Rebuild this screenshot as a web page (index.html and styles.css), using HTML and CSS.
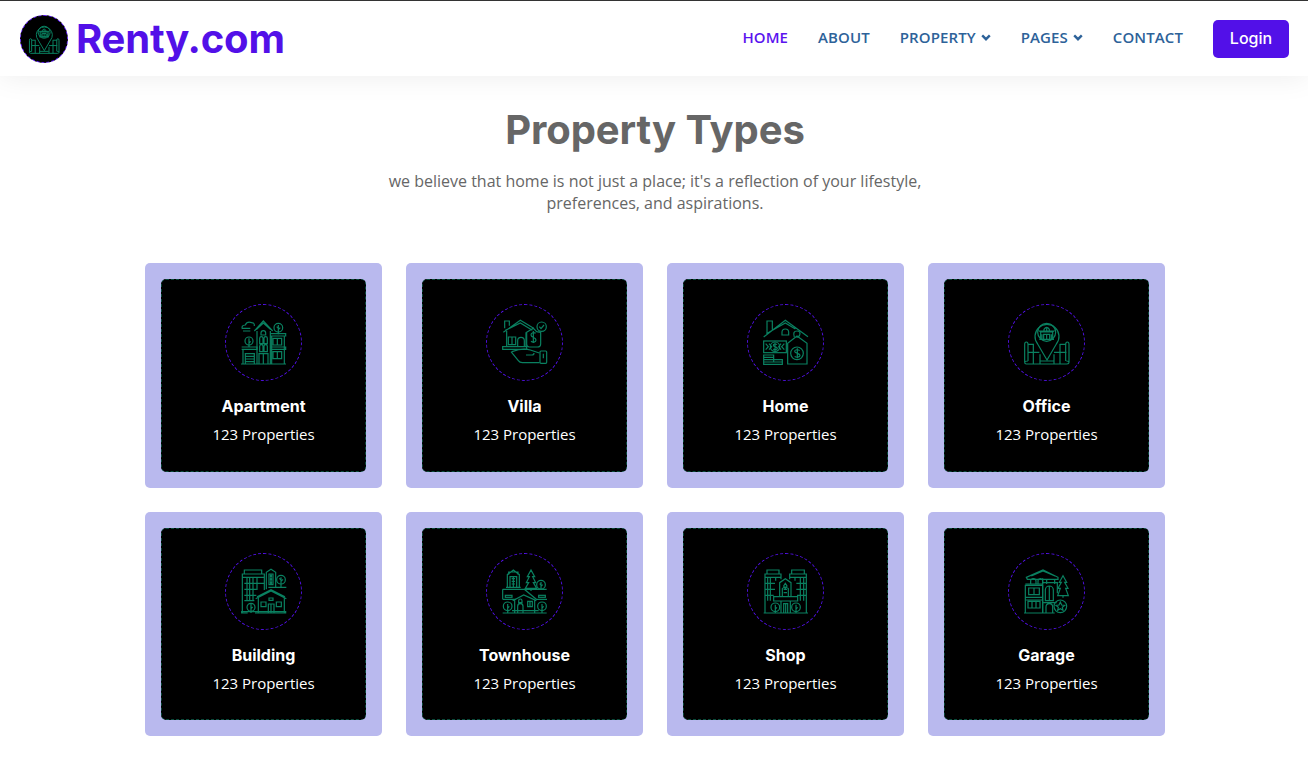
FILE: index.html
```html
<!DOCTYPE html>
<html lang="en">
<head>
<meta charset="utf-8">
<title>Renty.com</title>
<link rel="stylesheet" href="styles.css">
</head>
<body>
<header class="navbar">
  <a class="brand" href="#">
    <span class="brand-mark">
      <svg class="brand-icon"><use href="#i-office"/></svg>
    </span>
    <span class="brand-name">Renty.com</span>
  </a>
  <nav class="nav">
    <a class="nav-link active" href="#">HOME</a>
    <a class="nav-link" href="#">ABOUT</a>
    <a class="nav-link" href="#">PROPERTY<svg class="chev" viewBox="0 0 10 7"><path d="M1.2 1.4 5 5.2l3.8-3.8"/></svg></a>
    <a class="nav-link" href="#">PAGES<svg class="chev" viewBox="0 0 10 7"><path d="M1.2 1.4 5 5.2l3.8-3.8"/></svg></a>
    <a class="nav-link" href="#">CONTACT</a>
    <a class="login" href="#">Login</a>
  </nav>
</header>

<svg class="defs" aria-hidden="true">
  <defs>
    <symbol id="i-apartment" viewBox="78 75 135 135" overflow="visible">
      <path d="M82 102q-4-11 9-12 5-12 19-7 9 0 8 10M80 100h26M84 108h22"/>
      <path d="M118 108 145 78l28 30M124 104 145 84l22 20M126 108v99M166 108v99"/>
      <path d="M138 120v-6a7 7 0 0 1 14 0v6zM134 146v-16a5 5 0 0 1 10 0v16zM147 146v-16a5 5 0 0 1 10 0v16zM134 170v-16a5 5 0 0 1 10 0v16zM147 170v-16a5 5 0 0 1 10 0v16zM132 207v-31h27v31M145 176v31"/>
      <circle cx="190" cy="98" r="13"/><path d="M190 90v28M190 104l6-6M190 100l-5-5"/>
      <path d="M166 116h46v7h-46M170 123v84M208 123v84M174 130h26v20h-26zM187 130v20M166 156h46v7h-46M174 170h26v21h-26zM187 170v21"/>
      <circle cx="102" cy="138" r="12"/><path d="M102 130v26M102 144l5-5"/>
      <path d="M80 156h46v7H80M84 163v44M91 207v-31h27v31M91 184h27M91 192h27M91 200h27M78 207h135"/>
    </symbol>
    <symbol id="i-villa" viewBox="78 75 135 135" overflow="visible">
      <path d="M82 112 133 76l40 24M88 106 133 84l36 22M92 108V155M86 100V78h14v14M150 112v43"/>
      <path d="M97 126h22v23H97zM108 126v23M125 155v-18a10 10 0 0 1 20 0v18M80 155h72v8H80z"/>
      <path d="M152 112l20-12 10 10 12 2v34q0 10-10 10h-24q-8 0-8-8z"/>
      <circle cx="197" cy="95" r="14"/><path d="M190 95l5 6 9-11"/>
      <path d="M179 115c-5-4-14-2-14 5 0 9 15 6 15 15 0 7-10 8-15 4M172 108v36"/>
      <path d="M105 170l22 27q4 6 12 6h52M108 170q32-12 55-5l27 9M150 180h18q6 0 6-6"/>
      <rect x="192" y="168" width="20" height="37" rx="3"/><path d="M202 176v14"/>
    </symbol>
    <symbol id="i-home" viewBox="78 75 135 135" overflow="visible">
      <path d="M80 126 145 76l68 49M88 116 145 84l30 18M90 116V78h16v26"/>
      <path d="M135 120v-8a10 10 0 0 1 20 0v8z"/>
      <rect x="80" y="138" width="68" height="35"/><circle cx="114" cy="155" r="14"/>
      <path d="M120 149c-3-3-11-3-11 2 0 6 12 3 12 9 0 5-9 5-12 2M114 143v24M86 146l8 9-8 9M96 146l8 9-8 9M142 146l-8 9 8 9M132 146l-7 9 7 9"/>
      <path d="M80 180h30v7H80zM80 187h30v7H80zM80 194h30v7H80zM80 201h56v7H80zM110 194h26v7"/>
      <path d="M152 205v-60l28-22 30 22v62h-58z"/>
      <path d="M172 126q-6-18 8-18 12 0 8 12-3 8-10 6"/>
      <circle cx="180" cy="175" r="19"/>
      <path d="M188 167c-4-4-15-4-15 2 0 8 16 4 16 12 0 7-12 7-16 3M181 160v30"/>
    </symbol>
    <symbol id="i-office" viewBox="78 75 135 135" overflow="visible">
      <path d="M147 195l-28-48a36 36 0 1 1 56 0z"/>
      <circle cx="146" cy="112" r="27"/>
      <path d="M128 133v-22h36v22M124 133h44M128 111l-3-3h42l-3 3M138 111v-8q8-12 16 0v8M146 100v8M137 118h18v15h-18zM146 118v15M132 118v15M160 118v15"/>
      <path d="M80 148v54q0 5 5 5h122q6 0 6-5v-54q0-7-5-7t-5 7v50M80 148q0-7 5-7t5 7v50M90 198q-10 0-10 4M213 202q0-4-8-4M90 148h18M185 148h20"/>
      <path d="M90 172h34M168 172h37M106 148v59M186 148v59M126 178v29M168 178v29M126 198h41"/>
    </symbol>
    <symbol id="i-building" viewBox="78 75 135 135" overflow="visible">
      <path d="M82 207V90h66v48M88 90V78h52v12M82 100h66M104 100v70M126 100v38M88 118h60M88 136h36M88 154h36M88 170h30M96 100v70M114 100v70"/>
      <path d="M154 136V85l14-9 14 9v44M162 90h12v32h-12zM168 90v32"/>
      <circle cx="168" cy="96" r="2"/><circle cx="168" cy="106" r="2"/><circle cx="168" cy="116" r="2"/>
      <circle cx="198" cy="107" r="13"/><path d="M198 100v30M198 112l6-6M198 108l-5-5M160 130h54"/>
      <path d="M122 164l46-23 46 23M126 158l42-21 42 21"/>
      <path d="M130 162v45M208 162v45M160 207v-27h17v27M168 180v27M138 174h15v14h-15zM184 174h15v14h-15zM162 162h12v7h-12z"/>
      <circle cx="108" cy="190" r="12"/><path d="M108 180v27M108 194l5-5M98 207h-18v-4h132v4h-92"/>
    </symbol>
    <symbol id="i-townhouse" viewBox="78 75 135 135" overflow="visible">
      <path d="M94 130V92l18-14 18 14v38M98 92v-8h28v8M102 130V98h20v32M90 130h44M112 100v30M107 104h10M107 112h10M107 120h10"/>
      <path d="M165 78l-11 20h6l-9 18h7l-10 17h34l-10-17h7l-9-18h6zM165 133v8"/>
      <circle cx="195" cy="122" r="13"/><path d="M195 114v24M195 127l5-5M195 123l-4-4"/>
      <path d="M80 136h132M80 136v30M80 166h40M145 136l36 30h32M212 136h-30"/>
      <rect x="88" y="154" width="20" height="6"/><rect x="188" y="154" width="20" height="6"/>
      <path d="M110 170l33-17 38 17M116 207v-38M176 207v-40M125 207v-20a8 8 0 0 1 16 0v20M155 172h14v16h-14zM162 172v16M128 170a5 5 0 0 1 10 0v6h-10z"/>
      <circle cx="95" cy="187" r="13"/><path d="M95 180v27M95 192l5-5"/>
      <circle cx="198" cy="187" r="13"/><path d="M198 180v27M198 192l5-5M80 207h132M108 200h80"/>
    </symbol>
    <symbol id="i-shop" viewBox="78 75 135 135" overflow="visible">
      <path d="M84 207V90h48v16M90 90V78h36v12M84 100h48M100 100v70M116 100v10M84 118h30M84 136h30M84 154h26M92 100v70"/>
      <path d="M208 207V90h-50v16M202 90V78h-38v12M158 100h50M190 100v70M174 100v10M178 118h30M178 136h30M180 154h28M200 100v70"/>
      <path d="M128 156v-40l17-12 17 12v40M136 156v-22q9-10 18 0v22M145 118l-5 8 5 8 5-8zM140 136h10M140 146h10"/>
      <path d="M110 158h72v13h-72zM132 207v-36M160 207v-36M140 207v-28h12v28M146 179v28"/>
      <circle cx="115" cy="190" r="13"/><path d="M115 182v25M115 195l5-5"/>
      <circle cx="177" cy="190" r="13"/><path d="M177 182v25M177 195l5-5M80 207h133"/>
    </symbol>
    <symbol id="i-garage" viewBox="78 75 135 135" overflow="visible">
      <path d="M85 100l50-22 45 22v6H88zM100 96l35-15 36 15"/>
      <path d="M98 120v-10a7 7 0 0 1 8-6 8 8 0 0 1 8 6v10M120 120v-10a7 7 0 0 1 7-6 7 7 0 0 1 7 6v10M146 106v14M170 106v14"/>
      <path d="M82 207V124h52v83M134 120H82M82 160h52v8H82M92 132h32v20H92zM108 132v20M90 172h36v20H90zM102 172v20M114 172v20"/>
      <path d="M134 207v-104M134 116h44v32M142 170v-32a12 12 0 0 1 24 0v32zM154 126v44M136 176h40M144 207v-18a10 10 0 0 1 20 0v18M78 207h92"/>
      <path d="M195 95l-11 20h6l-10 18h7l-8 22h32l-8-22h7l-10-18h6zM195 155v6"/>
      <circle cx="187" cy="187" r="19"/><path d="M187 174l4 9 9 1-7 6 2 9-8-5-8 5 2-9-7-6 9-1z"/>
    </symbol>
  </defs>
</svg>

<main class="section">
  <div class="heading">
    <h1 class="title">Property Types</h1>
    <p class="lead">we believe that home is not just a place; it's a reflection of your lifestyle, preferences, and aspirations.</p>
  </div>
  <div class="grid">
    <article class="card"><div class="card-inner"><div class="ring"><svg class="icon"><use href="#i-apartment"/></svg></div><h2 class="name">Apartment</h2><p class="count">123 Properties</p></div></article>
    <article class="card"><div class="card-inner"><div class="ring"><svg class="icon"><use href="#i-villa"/></svg></div><h2 class="name">Villa</h2><p class="count">123 Properties</p></div></article>
    <article class="card"><div class="card-inner"><div class="ring"><svg class="icon"><use href="#i-home"/></svg></div><h2 class="name">Home</h2><p class="count">123 Properties</p></div></article>
    <article class="card"><div class="card-inner"><div class="ring"><svg class="icon"><use href="#i-office"/></svg></div><h2 class="name">Office</h2><p class="count">123 Properties</p></div></article>
    <article class="card"><div class="card-inner"><div class="ring"><svg class="icon"><use href="#i-building"/></svg></div><h2 class="name">Building</h2><p class="count">123 Properties</p></div></article>
    <article class="card"><div class="card-inner"><div class="ring"><svg class="icon"><use href="#i-townhouse"/></svg></div><h2 class="name">Townhouse</h2><p class="count">123 Properties</p></div></article>
    <article class="card"><div class="card-inner"><div class="ring"><svg class="icon"><use href="#i-shop"/></svg></div><h2 class="name">Shop</h2><p class="count">123 Properties</p></div></article>
    <article class="card"><div class="card-inner"><div class="ring"><svg class="icon"><use href="#i-garage"/></svg></div><h2 class="name">Garage</h2><p class="count">123 Properties</p></div></article>
  </div>
</main>
</body>
</html>
```

FILE: styles.css
```css
* { box-sizing: border-box; }
html, body { margin: 0; padding: 0; }
body {
  background: #fff;
  color: #666;
  font-family: "Open Sans", "Noto Sans", sans-serif;
  overflow: hidden;
}
a { text-decoration: none; }
.defs { width: 0; height: 0; display: block; }

.navbar {
  height: 76px;
  border-top: 1px solid #333;
  padding: 0 19px 0 20px;
  display: flex;
  align-items: center;
  justify-content: space-between;
  background: #fff;
  box-shadow: 0 0 30px rgba(0, 0, 0, .08);
}
.brand { display: flex; align-items: center; gap: 8px; }
.brand-mark {
  width: 48px;
  height: 48px;
  border-radius: 50%;
  background: #000;
  border: 1px dashed #5210e8;
  display: flex;
  align-items: center;
  justify-content: center;
}
.brand-icon { width: 30px; height: 30px; fill: none; stroke: #0a8060; stroke-width: 4.5; overflow: visible; }
.brand-name {
  font-family: "Inter", sans-serif;
  font-weight: 700;
  font-size: 40px;
  line-height: 48px;
  letter-spacing: -.2px;
  color: #5210e8;
}
.nav { display: flex; align-items: center; }
.nav-link {
  display: flex;
  align-items: center;
  margin-right: 30px;
  padding-bottom: 3px;
  font-family: "Open Sans", sans-serif;
  font-size: 15px;
  font-weight: 600;
  letter-spacing: .1px;
  color: #2d6299;
  line-height: 22px;
}
.nav-link.active { color: #5a14ef; }
.chev { width: 10px; height: 7px; margin-left: 5px; fill: none; stroke: #2d6299; stroke-width: 2.4; }
.login {
  width: 76px;
  height: 38px;
  padding-bottom: 1px;
  border-radius: 5px;
  background: #5210e8;
  color: #fff;
  font-family: "Inter", sans-serif;
  font-size: 16px;
  font-weight: 500;
  display: flex;
  align-items: center;
  justify-content: center;
}

.section { padding: 28px 143px 0 145px; }
.heading { text-align: center; }
.title {
  margin: 0;
  font-family: "Inter", sans-serif;
  font-weight: 700;
  font-size: 40px;
  line-height: 52px;
  letter-spacing: -.07px;
  color: #666;
}
.lead {
  width: 560px;
  margin: 14px auto 0;
  font-size: 16px;
  line-height: 22px;
  color: #666;
}
.grid {
  margin-top: 49px;
  display: grid;
  grid-template-columns: repeat(4, 237px);
  gap: 24px;
}
.card {
  padding: 16px;
  border-radius: 5px;
  background: #b9b9ee;
}
.card-inner {
  height: 192.6px;
  border: 1px dashed #0a4a3a;
  border-radius: 5px;
  background: #000;
  padding-top: 24px;
  text-align: center;
}
.ring {
  width: 77px;
  height: 77px;
  margin: 0 auto;
  border: 1px dashed #5210e8;
  border-radius: 50%;
  display: flex;
  align-items: center;
  justify-content: center;
}
.icon { width: 45px; height: 45px; fill: none; stroke: #0a8060; stroke-width: 3.6; overflow: visible; }
.name {
  margin: 13px 0 0;
  font-family: "Inter", sans-serif;
  font-size: 16px;
  font-weight: 700;
  line-height: 24px;
  color: #fff;
}
.count {
  margin: 4px 0 0;
  font-size: 15px;
  line-height: 24px;
  color: #fff;
}
```
